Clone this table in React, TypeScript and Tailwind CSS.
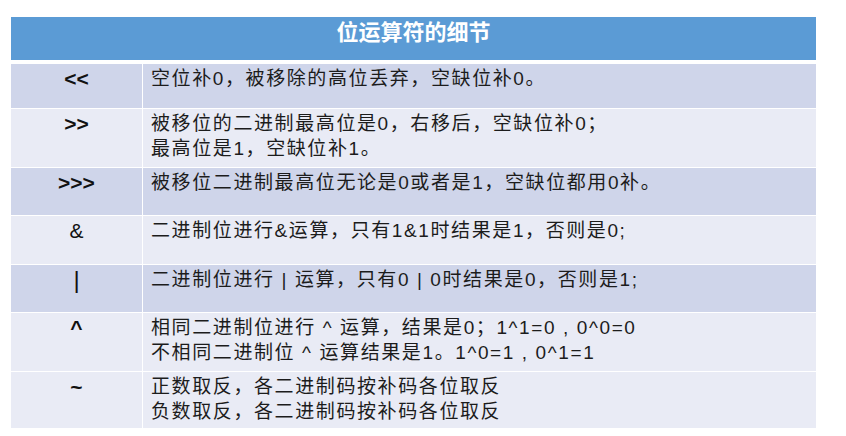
import React from "react";

const rows = [
  { op: "<<", opClass: "font-bold", lines: ["空位补0，被移除的高位丢弃，空缺位补0。"], h: "h-[44px]", bg: "bg-[#cfd5ea]", first: true },
  { op: ">>", opClass: "font-bold", lines: ["被移位的二进制最高位是0，右移后，空缺位补0；", "最高位是1，空缺位补1。"], h: "h-[59px]", bg: "bg-[#e9ebf5]" },
  { op: ">>>", opClass: "font-bold", lines: ["被移位二进制最高位无论是0或者是1，空缺位都用0补。"], h: "h-[48px]", bg: "bg-[#cfd5ea]" },
  { op: "&", opClass: "font-normal", lines: ["二进制位进行&运算，只有1&1时结果是1，否则是0;"], h: "h-[49px]", bg: "bg-[#e9ebf5]" },
  { op: "|", opClass: "font-normal text-[24px]", lines: ["二进制位进行 | 运算，只有0 | 0时结果是0，否则是1;"], h: "h-[48px]", bg: "bg-[#cfd5ea]" },
  { op: "^", opClass: "font-bold", lines: ["相同二进制位进行 ^ 运算，结果是0；1^1=0 , 0^0=0", "不相同二进制位 ^ 运算结果是1。1^0=1 , 0^1=1"], h: "h-[59px]", bg: "bg-[#e9ebf5]" },
  { op: "~", opClass: "font-bold", lines: ["正数取反，各二进制码按补码各位取反", "负数取反，各二进制码按补码各位取反"], h: "h-[57px]", bg: "bg-[#e9ebf5]" },
];

export default function App() {
  return (
    <div className="w-[846px] h-[436px] bg-white overflow-hidden font-[family-name:'Liberation_Sans','Noto_Sans_CJK_SC',sans-serif]">
      <div className="ml-[11px] mt-[17px] w-[805px] flex flex-col">
        {/* title bar */}
        <div className="h-[43px] bg-[#5b9bd5] flex justify-center pt-[3px]">
          <span className="text-white text-[22px] leading-[26px] font-bold">位运算符的细节</span>
        </div>
        <div className="h-[4px] bg-white" />

        {rows.map((r) => (
          <div key={r.op} className={`flex ${r.h} ${r.bg} ${r.first ? "" : "border-t border-white"}`}>
            <div className="w-[131px] shrink-0 flex justify-center pt-[2px]">
              <span className={`text-[21px] leading-[25px] text-[#111] ${r.opClass}`}>{r.op}</span>
            </div>
            <div className="flex-1 border-l border-white pl-[8px] pt-[2px] flex flex-col">
              {r.lines.map((l) => (
                <span key={l} className="text-[19px] leading-[25px] tracking-[1.6px] text-[#1c1c1c] whitespace-nowrap">
                  {l}
                </span>
              ))}
            </div>
          </div>
        ))}
      </div>
    </div>
  );
}
